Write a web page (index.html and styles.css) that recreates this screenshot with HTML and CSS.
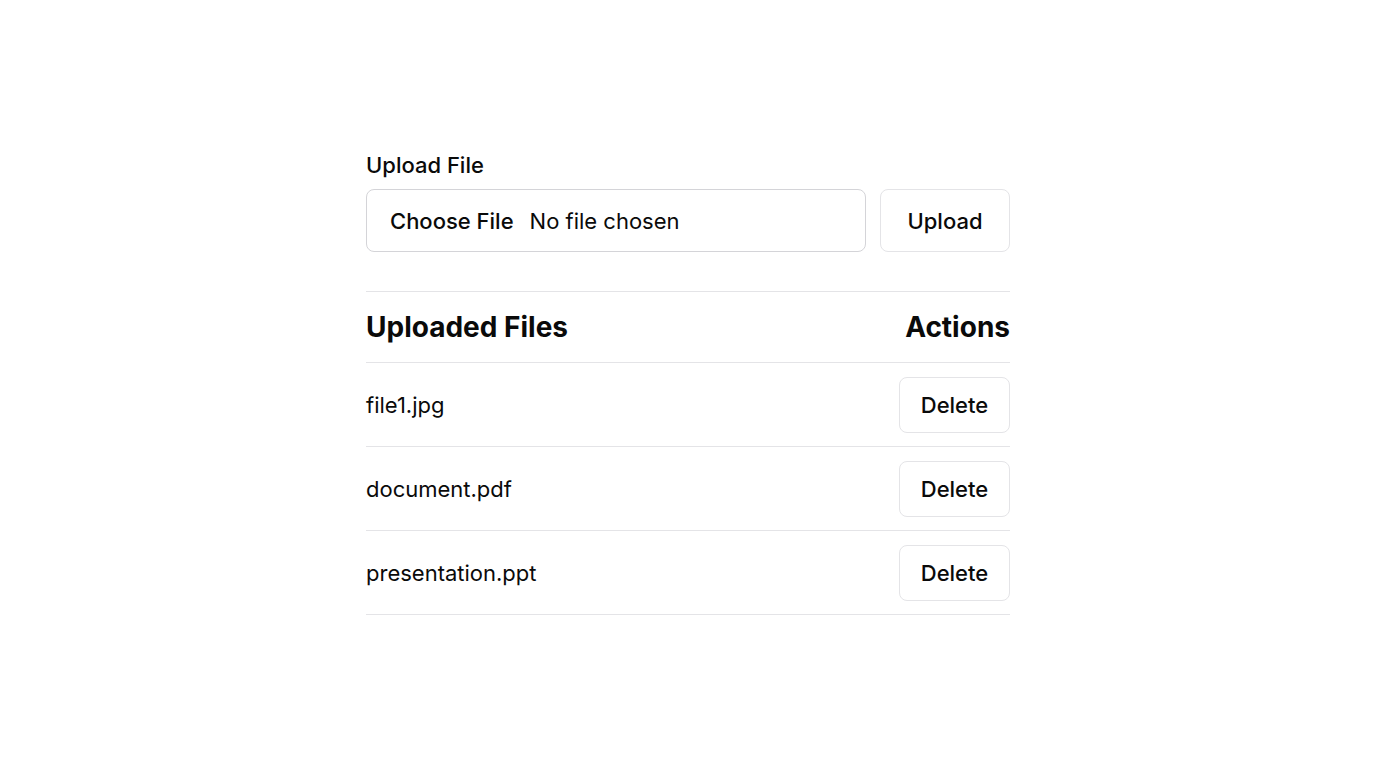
FILE: index.html
```html
<!DOCTYPE html>
<html lang="en">
<head>
<meta charset="utf-8">
<title>Upload File</title>
<link rel="stylesheet" href="styles.css">
</head>
<body>
<main class="panel">
  <div class="field-label">Upload File</div>
  <div class="upload-row">
    <label class="file-box">
      <input class="file-input" type="file">
      <span class="file-btn">Choose File</span>
      <span class="file-name">No file chosen</span>
    </label>
    <button class="btn upload-btn" type="button">Upload</button>
  </div>
  <section class="files">
    <div class="files-head">
      <span class="head-title">Uploaded Files</span>
      <span class="head-title">Actions</span>
    </div>
    <div class="file-row">
      <span class="row-name">file1.jpg</span>
      <button class="btn delete-btn" type="button">Delete</button>
    </div>
    <div class="file-row">
      <span class="row-name">document.pdf</span>
      <button class="btn delete-btn" type="button">Delete</button>
    </div>
    <div class="file-row">
      <span class="row-name">presentation.ppt</span>
      <button class="btn delete-btn" type="button">Delete</button>
    </div>
  </section>
</main>
</body>
</html>
```
FILE: styles.css
```css
* { box-sizing: border-box; }
html, body { margin: 0; padding: 0; background: #fff; }
body {
  font-family: Inter, "Noto Sans", "Liberation Sans", sans-serif;
  color: #0a0a0a;
}
.panel {
  width: 644px;
  margin: 0 auto;
  padding-top: 151px;
}
.field-label {
  font-size: 22px;
  font-weight: 500;
  line-height: 28px;
  margin-bottom: 10px;
}
.upload-row {
  display: flex;
  gap: 14px;
}
.file-box {
  flex: 1;
  height: 63px;
  border: 1.5px solid #d4d4d8;
  border-radius: 8px;
  display: flex;
  align-items: center;
  padding-left: 23px;
  gap: 16px;
  font-size: 22px;
  cursor: pointer;
}
.file-input { display: none; }
.file-btn { font-weight: 500; }
.file-name { font-weight: 400; }
.btn {
  font-family: inherit;
  color: #0a0a0a;
  background: #fff;
  border: 1.5px solid #e4e4e7;
  border-radius: 8px;
  font-size: 22px;
  font-weight: 500;
  cursor: pointer;
}
.upload-btn {
  width: 130px;
  height: 63px;
}
.files {
  margin-top: 39px;
  border-top: 1.5px solid #e4e4e7;
}
.files-head {
  height: 71px;
  display: flex;
  align-items: center;
  justify-content: space-between;
  border-bottom: 1.5px solid #e4e4e7;
}
.head-title {
  font-size: 28px;
  font-weight: 700;
}
.file-row {
  height: 84px;
  display: flex;
  align-items: center;
  justify-content: space-between;
  border-bottom: 1.5px solid #e4e4e7;
}
.row-name {
  font-size: 22px;
  font-weight: 400;
}
.delete-btn {
  width: 111px;
  height: 56px;
}
```
